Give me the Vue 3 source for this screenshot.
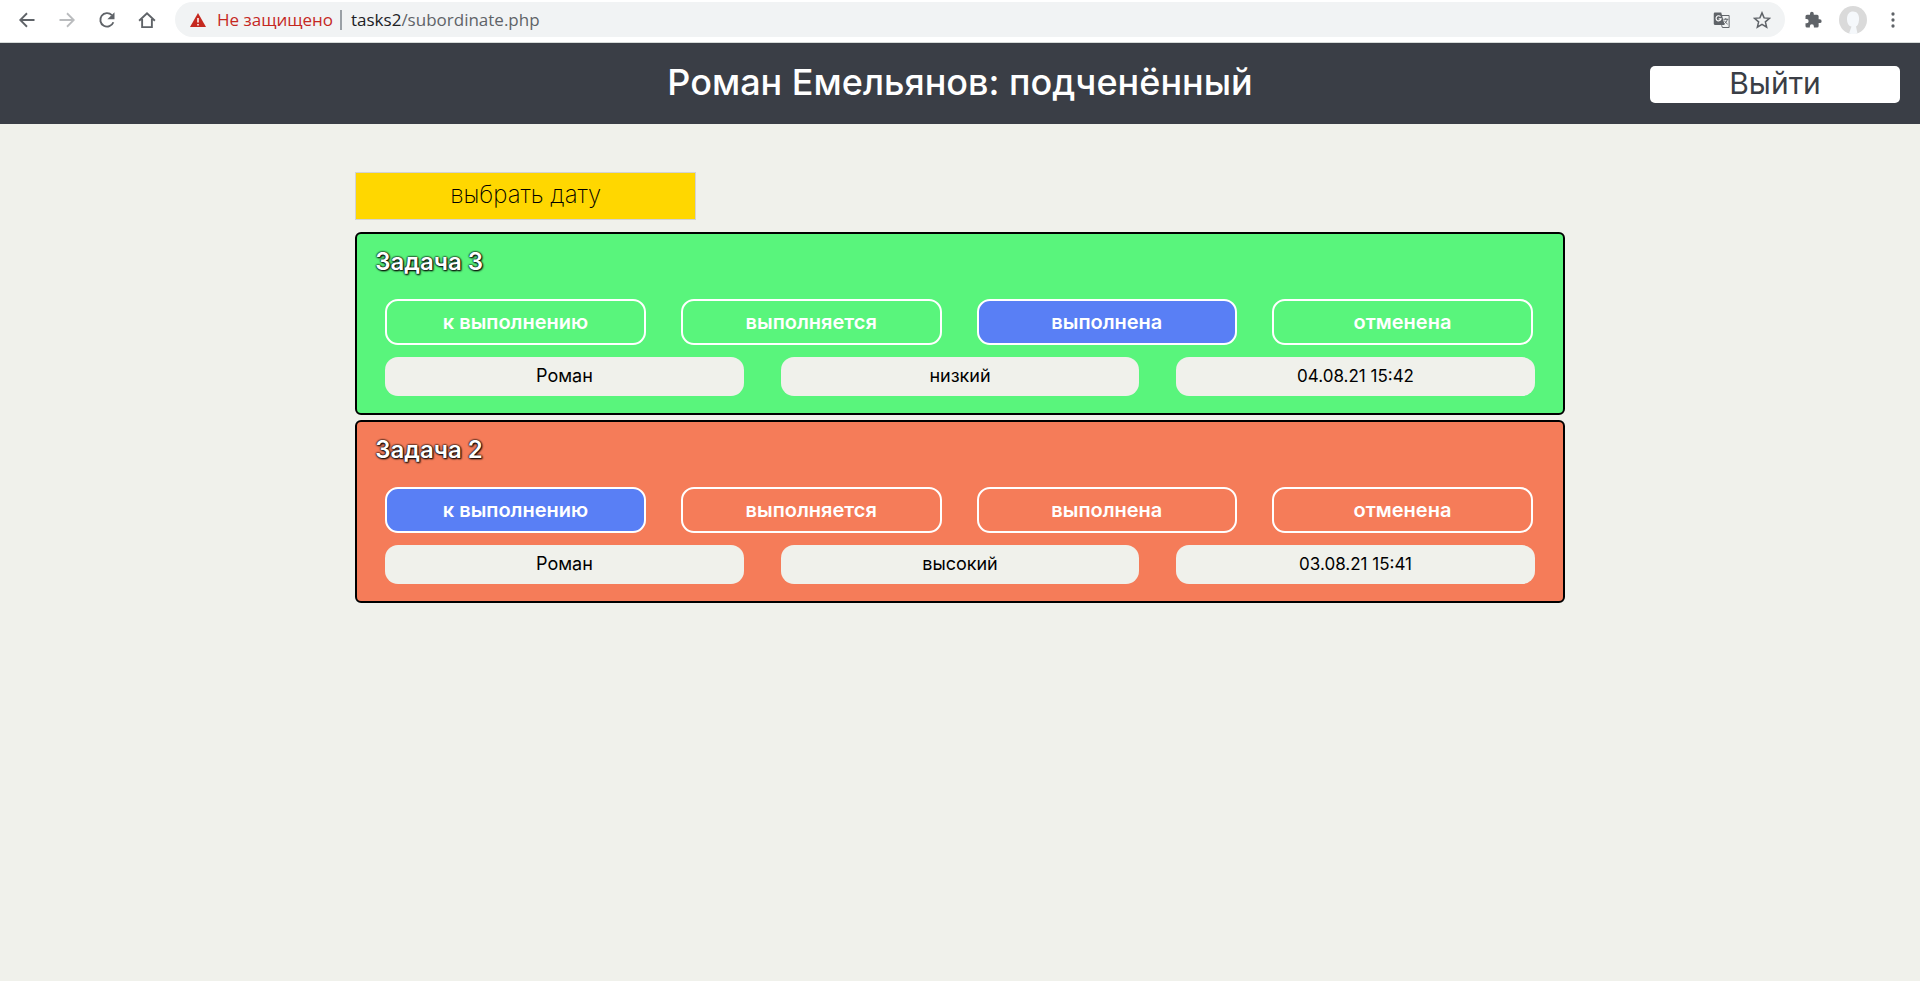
<script setup>
const steps = ['к выполнению', 'выполняется', 'выполнена', 'отменена']
const tasks = [
  { title: 'Задача 3', tone: 'green', active: 2, person: 'Роман', priority: 'низкий', date: '04.08.21 15:42' },
  { title: 'Задача 2', tone: 'orange', active: 0, person: 'Роман', priority: 'высокий', date: '03.08.21 15:41' },
]
</script>

<template>
  <div class="screen">
    <nav class="browser" aria-label="Браузер">
      <button class="tool" aria-label="Назад">
        <svg viewBox="0 0 24 24"><path d="M22 12H4M12 3L3 12l9 9" fill="none" stroke="#5f6368" stroke-width="2.400" /></svg>
      </button>
      <button class="tool" aria-label="Вперёд">
        <svg viewBox="0 0 24 24"><path d="M2 12h18M12 3l9 9-9 9" fill="none" stroke="#babcbe" stroke-width="2.400" /></svg>
      </button>
      <button class="tool" aria-label="Обновить">
        <svg viewBox="0 0 24 24"><path d="M20.500 15a9 9 0 1 1-2-9.500" fill="none" stroke="#5f6368" stroke-width="2.500" /><path d="M22 1.500v9.500h-9.500z" fill="#5f6368" /></svg>
      </button>
      <button class="tool" aria-label="Домой">
        <svg viewBox="0 0 24 24"><path d="M1.500 13L12 3l10.500 10M5.500 10.500v11h13v-11" fill="none" stroke="#5f6368" stroke-width="2.500" /></svg>
      </button>
      <div class="address">
        <svg class="warn" viewBox="0 0 16 16"><path d="M8 1l8 14H0z" fill="#c5281f" /><path d="M8 6v4.500M8 12v1.500" stroke="#fff" stroke-width="1.500" /></svg>
        <span class="unsafe">Не защищено</span>
        <span class="bar"></span>
        <span class="url"><b>tasks2</b>/subordinate.php</span>
        <button class="tool push" aria-label="Перевести">
          <svg viewBox="0 0 24 24"><path d="M10 6h11.500v16H12.500l-1-3" fill="none" stroke="#5f6368" stroke-width="1.300" /><path d="M2.500 2h8.500l4.500 16.500h-13A1.500 1.500 0 0 1 1 17V3.500A1.500 1.500 0 0 1 2.500 2z" fill="#5f6368" /><path d="M10 7.500a3.400 3.400 0 1 0 .8 3H7.500" fill="none" stroke="#fff" stroke-width="1.500" /><path d="M14 11h6.500M17 9.500V11M19 11c-.5 3-2 4.500-4 6M15.500 13c.8 2 2 3.200 4 4.500" fill="none" stroke="#5f6368" stroke-width="1.300" /></svg>
        </button>
        <button class="tool" aria-label="В закладки">
          <svg viewBox="0 0 24 24"><path d="M12 2.500l2.800 6.700 7.200.6-5.500 4.700 1.700 7-6.200-3.700-6.200 3.700 1.700-7L2 9.800l7.200-.6z" fill="none" stroke="#5f6368" stroke-width="2" /></svg>
        </button>
      </div>
      <div class="tools">
        <button class="tool" aria-label="Расширения">
          <svg viewBox="0 0 24 24"><path d="M21 11h-1.500V7a2 2 0 0 0-2-2H13V3.500a2.500 2.500 0 0 0-5 0V5H4a2 2 0 0 0-2 2v3.800h1.500a2.700 2.700 0 0 1 0 5.400H2V20a2 2 0 0 0 2 2h3.800v-1.500a2.700 2.700 0 0 1 5.400 0V22h4.300a2 2 0 0 0 2-2v-4H21a2.500 2.500 0 0 0 0-5z" fill="#5f6368" /></svg>
        </button>
        <button class="tool avatar" aria-label="Профиль">
          <svg viewBox="0 0 28 28"><circle cx="14" cy="14" r="14" fill="#dadada" /><path d="M14 5.500c4.500 0 6.500 3.500 6 8.500-.3 4-1.500 5.500-3 6.500l1.500 7a14 14 0 0 1-8.500 0l2.500-7C9.500 20 8 17 8 13c0-5 2.500-7.500 6-7.500z" fill="#f5f8fb" /></svg>
        </button>
        <button class="tool" aria-label="Меню">
          <svg viewBox="0 0 24 24"><g fill="#5f6368"><circle cx="12" cy="4" r="2.200" /><circle cx="12" cy="12" r="2.200" /><circle cx="12" cy="20" r="2.200" /></g></svg>
        </button>
      </div>
    </nav>
    <header class="header">
      <h1>Роман Емельянов: подченённый</h1>
      <button class="logout">Выйти</button>
    </header>
    <main class="content">
      <button class="date">выбрать дату</button>
      <article v-for="task in tasks" :key="task.title" class="task" :class="task.tone">
        <h2>{{ task.title }}</h2>
        <div class="steps">
          <button v-for="(step, i) in steps" :key="step" class="step" :class="{ active: i === task.active }">{{ step }}</button>
        </div>
        <div class="infos">
          <span class="info">{{ task.person }}</span>
          <span class="info">{{ task.priority }}</span>
          <time class="info">{{ task.date }}</time>
        </div>
      </article>
    </main>
  </div>
</template>

<style>
body {
  margin: 0;
  background: #f0f1eb;
}
</style>

<style scoped>
.screen {
  min-height: 100vh;
  background: #f0f1eb;
  font-family: Inter, 'Noto Sans', sans-serif;
  color: #000;
}
button {
  font-family: inherit;
  cursor: pointer;
}
.browser {
  box-sizing: border-box;
  height: 43px;
  padding: 2px 15px 5px;
  border-bottom: 1px solid #d5dad8;
  background: #fff;
  display: flex;
  align-items: center;
  gap: 16px;
}
.tools {
  display: flex;
  align-items: center;
  gap: 14px;
}
.tool {
  flex: none;
  width: 24px;
  height: 24px;
  padding: 3px;
  border: 0;
  background: none;
}
.tool svg {
  display: block;
  width: 100%;
  height: 100%;
}
.avatar {
  width: 28px;
  height: 28px;
  padding: 0;
}
.address {
  flex: 1;
  box-sizing: border-box;
  height: 35px;
  padding: 0 11px 0 15px;
  border-radius: 18px;
  background: #f1f3f4;
  display: flex;
  align-items: center;
  font: 17px 'Open Sans', sans-serif;
}
.warn {
  width: 16px;
  height: 16px;
  margin-right: 11px;
}
.unsafe {
  color: #c5281f;
}
.bar {
  width: 2px;
  height: 20px;
  margin: 0 9px 0 7px;
  background: #9aa0a6;
}
.url {
  color: #5f6368;
}
.url b {
  font-weight: 400;
  color: #202124;
}
.push {
  margin: 0 16px 0 auto;
}
.header {
  box-sizing: border-box;
  min-height: 81px;
  padding: 0 20px;
  background: #3a3e46;
  display: grid;
  grid-template-columns: 1fr auto 1fr;
  align-items: center;
}
h1 {
  grid-column: 2;
  margin: 0;
  padding-bottom: 4px;
  font-size: 36px;
  font-weight: 500;
  line-height: 44px;
  color: #fff;
}
.logout {
  justify-self: end;
  width: 250px;
  height: 37px;
  margin-top: 2px;
  padding: 0 0 3px;
  border: 0;
  border-radius: 5px;
  background: #fff;
  color: #3a3e46;
  font-size: 30px;
  line-height: 34px;
}
.content {
  width: 63%;
  margin: 0 auto;
  padding-top: 48px;
}
.date {
  display: block;
  width: 341px;
  height: 48px;
  margin-bottom: 12px;
  padding: 0 0 3px;
  border: 1px solid #d3d3d3;
  background: #ffd700;
  color: #000;
  font-size: 24px;
  font-weight: 200;
}
.task {
  box-sizing: border-box;
  margin-bottom: 5px;
  padding: 13px 28px 17px;
  border: 2px solid #000;
  border-radius: 6px;
}
.green {
  background: #59f57c;
}
.orange {
  background: #f57c59;
}
h2 {
  margin: 0 0 22px -10px;
  font-size: 24px;
  font-weight: 600;
  line-height: 30px;
  color: #fff;
  text-shadow: 0 0 2px #000, 0 0 2px #000, 1px 1px 2px #000;
}
.steps {
  display: grid;
  grid-template-columns: repeat(4, 1fr);
  gap: 35px;
  margin-right: 2px;
  margin-bottom: 12px;
}
.step {
  height: 46px;
  padding: 0;
  border: 2px solid #fff;
  border-radius: 13px;
  background: transparent;
  color: #fff;
  font-size: 20px;
  font-weight: 600;
}
.active {
  background: #597ff5;
}
.infos {
  display: grid;
  grid-template-columns: repeat(3, 1fr);
  gap: 37px;
}
.info {
  height: 39px;
  border-radius: 13px;
  background: #f0f1eb;
  font-size: 18px;
  line-height: 38px;
  text-align: center;
}
time.info {
  font-size: 17px;
}
</style>
